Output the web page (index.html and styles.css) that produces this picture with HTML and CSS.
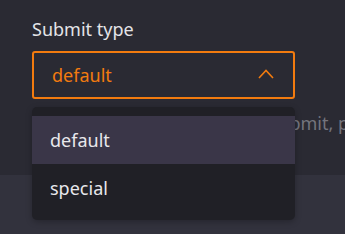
FILE: index.html
```html
<!DOCTYPE html>
<html lang="en">
<head>
  <meta charset="UTF-8" />
  <title>Submit type</title>
  <link rel="stylesheet" href="styles.css">
</head>
<body>
  <div class="panel">
    <div class="field">
      <label class="field-label">Submit type</label>
      <div class="select-wrap">
        <div class="select open">
          <span class="select-value">default</span>
          <svg class="chevron" width="16" height="10" viewBox="0 0 16 10">
            <polyline points="1,9 8,1.5 15,9" fill="none" stroke="#f27b0f" stroke-width="1.6"/>
          </svg>
        </div>
        <p class="hint">Choose the actions used on submit, press Enter</p>
        <ul class="menu">
          <li class="menu-item active">default</li>
          <li class="menu-item">special</li>
        </ul>
      </div>
    </div>
  </div>
  <div class="footer"></div>
</body>
</html>
```

FILE: styles.css
```css
body {
    margin: 0;
    font-family: "Noto Sans", "Open Sans", sans-serif;
    background-color: #2a2a33;
    overflow: hidden;
    height: 234px;
}

.panel {
    height: 175px;
    padding: 17px 32px 0 32px;
    box-sizing: border-box;
}

.field-label {
    display: block;
    color: #e4e4e8;
    font-size: 18px;
    line-height: 25px;
    margin-bottom: 9px;
}

.select-wrap {
    position: relative;
    width: 263px;
}

.select {
    display: flex;
    justify-content: space-between;
    align-items: center;
    height: 48px;
    border: 2px solid #f27b0f;
    border-radius: 3px;
    padding: 0 19px 0 18px;
    box-sizing: border-box;
}

.select-value {
    color: #f27b0f;
    font-size: 18px;
}

.chevron {
    margin-top: -2px;
}

.hint {
    width: 313px;
    margin: 12px 0 0 0;
    white-space: nowrap;
    overflow: hidden;
    color: #74747d;
    font-size: 18px;
}

.menu {
    position: absolute;
    top: 56px;
    left: 0;
    width: 263px;
    margin: 0;
    padding: 9px 0 8px 0;
    list-style: none;
    background-color: #202026;
    border-radius: 5px;
    box-shadow: 0 2px 6px rgba(0,0,0,0.25);
}

.menu-item {
    height: 48px;
    line-height: 48px;
    padding-left: 18px;
    color: #e8e8ec;
    font-size: 18px;
}

.menu-item.active {
    background-color: #3a3648;
}

.footer {
    height: 59px;
    background-color: #32323d;
}
```
